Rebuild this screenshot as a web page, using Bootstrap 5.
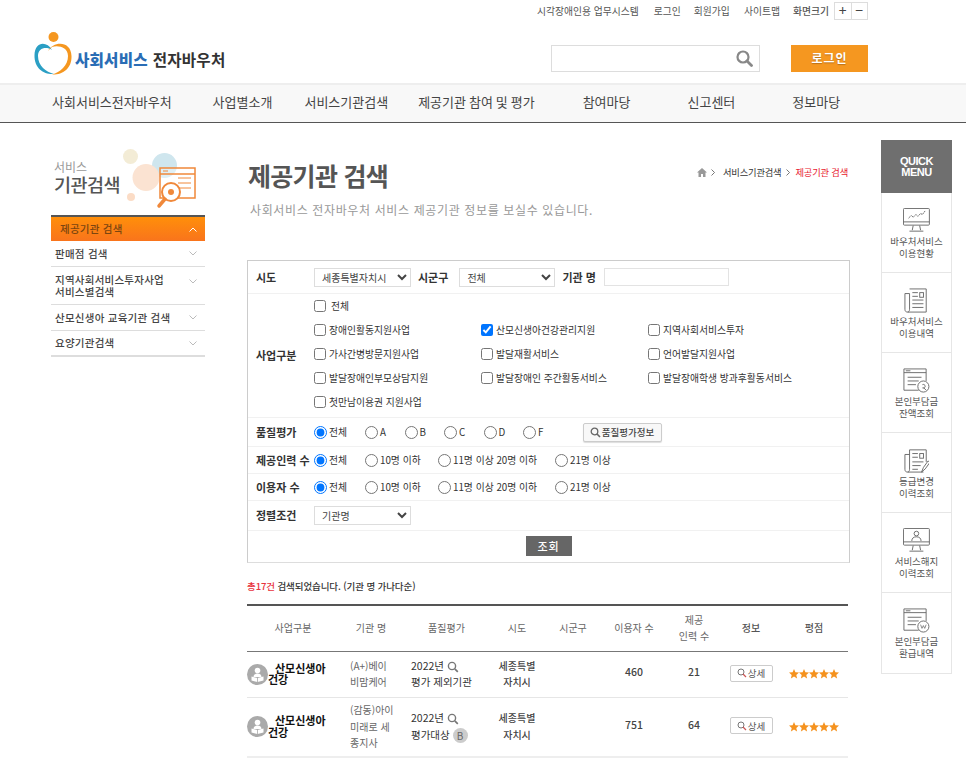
<!DOCTYPE html>
<html lang="ko">
<head>
<meta charset="utf-8">
<title>제공기관 검색</title>
<link rel="stylesheet" href="https://cdn.jsdelivr.net/npm/bootstrap@5.3.0/dist/css/bootstrap.min.css">
<style>
html,body{height:761px;overflow:hidden}
body{font-family:"Noto Sans CJK KR","Noto Sans",sans-serif;font-size:11px;color:#444;background:#fff;line-height:1.3}
.util-bar{height:22px;padding-right:98px;color:#555;font-size:9.8px}
.util-bar a{color:#555;text-decoration:none}
.util-link{margin-left:15px}
.util-link.u3{margin-left:13px}.util-link.u4{margin-left:14px}.util-link.u5{margin-left:13px;font-weight:500}
.size-box{margin-left:5px;border:1px solid #ddd;height:18px;width:34px;font-size:14px;color:#444}
.size-box span{flex:1;text-align:center;line-height:15px}
.size-box span+span{border-left:1px solid #ddd}
.head-row{height:61px;padding:0 98px 0 33px}
.logo-svg{margin-top:3px}
.logo-txt{font-size:15.6px;font-weight:700;color:#333;margin-left:2px;margin-top:13px;letter-spacing:.2px}
.logo-txt b{color:#2a6db5;margin-right:5px}
.search-box{width:209px;height:27px;border:1px solid #ddd;margin-top:11px;padding-right:6px}
.login-btn{width:77px;height:27px;background:#f59720;color:#fff;font-size:12px;font-weight:700;border-radius:0;border:0;padding:0;margin-left:31px;margin-top:11px;letter-spacing:1px;text-shadow:0 1px 1px #b8701a}
.login-btn:hover{background:#f59720;color:#fff}
.gnb{height:40px;background:#f8f8f8;border-top:2px solid #eee;border-bottom:1px solid #555;padding:0 0 5px 52px;align-items:center;flex-wrap:nowrap}
.gnb .nav-link{padding:0;color:#444;font-size:13px;line-height:17px;white-space:nowrap;word-spacing:-.7px}
.gnb .g2{margin-left:41px}.gnb .g3{margin-left:32px}.gnb .g4{margin-left:30px}.gnb .g5{margin-left:48px}.gnb .g6{margin-left:57px}.gnb .g7{margin-left:57px}
.page-row{padding:17px 14px 0 51px}
.side-col{width:154px;flex:none;margin-right:42px;padding-top:8px}
.side-head{height:67px;padding-left:3px}
.side-small{font-size:12px;color:#999;line-height:13px;padding-top:12px}
.side-big{font-size:18.5px;font-weight:500;color:#555;line-height:23px;letter-spacing:-.5px;white-space:nowrap}
.side-menu .list-group-item{border:0;border-bottom:1px solid #ddd;border-radius:0;padding:0 4px;min-height:26px;font-size:10.5px;color:#444;font-weight:500;line-height:12px;background:transparent;letter-spacing:.25px}
.side-menu .list-group-item.on{height:26px;background:linear-gradient(#ff8f0a,#f9741c);border-top:2px solid #555;border-bottom:0;color:#7a4510;padding-left:9px}
.side-menu .list-group-item.tall{min-height:38px}
.side-menu .list-group-item:last-child{border-bottom-width:2px}
.main-col{width:603px;flex:none;margin-right:31px}
.title-row{height:62px;padding-left:1px}
.page-title{font-size:25px;font-weight:700;color:#555;margin:17px 0 0;line-height:36px;letter-spacing:-.7px}
.crumb{font-size:9.300px;color:#333;padding:26px 2px 0 0;letter-spacing:-.2px}
.crumb .now{color:#e8212e}
.crumb svg.home{margin-right:4px}
.crumb svg.sep{margin:0 8px 0 0}
.crumb svg.sep2{margin:0 5px}
.sub-txt{font-size:12px;color:#999;padding-left:3px;margin:0 0 42px;line-height:16px;letter-spacing:.63px;height:16px;white-space:nowrap}
.form-wrap{border:1px solid #ccc;border-bottom-color:#ddd;height:303px;font-size:9.8px;color:#333}
.frow{border-bottom:1px solid #f1f1f1;padding-left:8px;white-space:nowrap}
.lab{width:58px;flex:none;font-size:11px;font-weight:700;color:#333}
.lab-in{font-size:11px;font-weight:700;color:#333}
.ml-7{margin-left:7px}.ml-8{margin-left:8px}.ml-11{margin-left:11px}
.h33{height:33px}.h124{height:124px}.h29{height:29px}.h27{height:27px}.h30{height:30px}
.sel-own.form-select{appearance:auto;-webkit-appearance:auto;background-image:none;width:97px;height:19px;padding:0 0 0 3px;font-size:10px;border-radius:0;border:1px solid #ddd;color:#444;line-height:17px}
.sel-own.sel-narrow{width:96px}
.name-in.form-control{width:125px;height:18px;border-radius:0;border:1px solid #e3e3e3;padding:0}
.chk-grid{display:grid;grid-template-columns:167px 167px 190px;grid-auto-rows:24px;align-items:center;margin-bottom:2px}
.opt{display:flex;align-items:center;gap:3px;margin:0;color:#333}
.opt input{margin:0;width:12px;height:12px;flex:none}
.opt.rd input{width:13px;height:13px}
.opt.rd{gap:2px}
.all-txt{margin-left:2px}
.w-all{width:51px}.w-g{width:39.5px}.w-10{width:73px}.w-11{width:117px}
.q-btn{margin-left:20px;width:79px;height:19px;padding:0;font-size:9.5px;color:#444;background:#f8f8f8;border:1px solid #ccc;border-radius:2px;font-weight:500;box-shadow:0 1px 1px #ddd;display:flex;align-items:center;justify-content:center;gap:1px}
.go-wrap{padding-top:5px}
.go-btn{width:46px;height:20px;background:#666;color:#fff;font-size:11px;padding:0;border:0;border-radius:0;font-weight:500;letter-spacing:1px}
.go-btn:hover{background:#666;color:#fff}
.res-line{font-size:9.5px;font-weight:500;color:#333;margin:16px 0 11px;line-height:14px;height:14px;letter-spacing:-.1px}
.res-line b{color:#e8323c;font-weight:500}
.tbl{width:601px;table-layout:fixed;margin:0;border-top:2px solid #555;font-size:10px}
.tbl th,.tbl td{padding:0;text-align:center;vertical-align:middle;color:#555;font-weight:400;border-bottom:1px solid #e6e6e6;background:transparent;line-height:16.5px}
.tbl thead th{height:46px;border-bottom:1px solid #777;color:#666}
.tbl thead th b{font-weight:500;color:#555}
.tbl .r1 td{height:46px}.tbl .r2 td{height:60px;border-bottom:2px solid #eee}
.cat{font-size:11px;font-weight:700;color:#111;line-height:11.5px;text-align:left;text-indent:7px;word-break:keep-all;width:64px}
.cat-ic{width:21px;height:21px;flex:none;display:block}
.tbl td.org,.tbl td.qual{text-align:left;font-size:10px}
.tbl td.org{padding-left:11px;color:#666}
.tbl td.qual{padding-left:8px;color:#333;font-size:10.5px}
.tbl td.sido{font-weight:500;color:#444;font-size:10px}
.tbl td.num{font-size:10.5px;color:#444;font-weight:500;padding-bottom:4px}
.bdg{display:inline-block;width:15px;height:15px;border-radius:50%;background:#ccc;text-align:center;font-size:10px;line-height:15px;color:#666;vertical-align:middle}
.dt-btn{width:43px;height:17px;padding:0;font-size:9.5px;color:#555;background:#fff;border:1px solid #ccc;border-radius:2px;display:inline-flex;align-items:center;justify-content:center;gap:1px;vertical-align:middle;margin-bottom:2px}
.stars{display:block;margin:0 auto}
.quick{width:71px;flex:none}
.quick-top{height:53px;background:#6f6f6f;color:#fff;font-family:"Liberation Sans",sans-serif;font-size:11px;font-weight:700;line-height:11px;letter-spacing:-.5px;text-align:center}
.quick-list{border:1px solid #e6e6e6;border-top:0}
.quick-item{height:80px;border-bottom:1px solid #e6e6e6;text-align:center;font-size:9.5px;line-height:12px;color:#555;padding-top:15px}
.quick-item:last-child{border-bottom:0}
.quick-item svg{display:block;margin:0 auto 2px;height:25px;width:auto}
</style>
</head>
<body>
<div class="util-bar d-flex justify-content-end align-items-center">
  <a class="util-link" href="#">시각장애인용 업무시스템</a><a class="util-link" href="#">로그인</a><a class="util-link u3" href="#">회원가입</a><a class="util-link u4" href="#">사이트맵</a><span class="util-link u5">화면크기</span>
  <div class="size-box d-flex"><span>+</span><span>−</span></div>
</div>
<div class="head-row d-flex align-items-center">
  <svg class="logo-svg" width="40" height="46" viewBox="33 31 40 46" aria-hidden="true">
    <circle cx="53.500" cy="37" r="5" fill="#f59720"/>
    <path d="M52 50C47 41 35 41 34.500 55C34 69 45 75 54 74C46 72 38 66 38 56C38 48 46 46 52 50Z" fill="#2b9fc4"/>
    <path d="M48 51C53 41 71 40 71.500 56C72 69 62 75 52 74.500C60 72 68 66 68 56C68 47 58 45 52 47Z" fill="#f59720"/>
  </svg>
  <div class="logo-txt"><b>사회서비스</b>전자바우처</div>
  <div class="search-box d-flex align-items-center justify-content-end ms-auto">
    <svg width="18" height="18" viewBox="0 0 18 18" aria-hidden="true"><circle cx="8" cy="8" r="5.500" fill="none" stroke="#888" stroke-width="2.200"/><path d="M12 12l4.500 4.500" stroke="#888" stroke-width="2.800" stroke-linecap="round"/></svg>
  </div>
  <button class="btn login-btn" type="button">로그인</button>
</div>
<ul class="nav gnb">
  <li class="nav-item"><a class="nav-link" href="#">사회서비스전자바우처</a></li>
  <li class="nav-item g2"><a class="nav-link" href="#">사업별소개</a></li>
  <li class="nav-item g3"><a class="nav-link" href="#">서비스기관검색</a></li>
  <li class="nav-item g4"><a class="nav-link" href="#">제공기관 참여 및 평가</a></li>
  <li class="nav-item g5"><a class="nav-link" href="#">참여마당</a></li>
  <li class="nav-item g6"><a class="nav-link" href="#">신고센터</a></li>
  <li class="nav-item g7"><a class="nav-link" href="#">정보마당</a></li>
</ul>
<div class="page-row d-flex align-items-start">
  <aside class="side-col">
    <div class="side-head d-flex">
      <div><div class="side-small">서비스</div><div class="side-big">기관검색</div></div>
      <svg class="ms-auto" width="82" height="66" viewBox="123 148 82 66" aria-hidden="true">
        <circle cx="130.500" cy="156.500" r="7.500" fill="#f3ecd6"/>
        <circle cx="164.500" cy="165.500" r="12.500" fill="#cfe6ee"/>
        <circle cx="146" cy="177.500" r="13.500" fill="#fbe3d2"/>
        <circle cx="131" cy="197" r="4" fill="#fbdcc6"/>
        <rect x="160" y="168" width="35" height="30" fill="#fff" fill-opacity=".35" stroke="#f0883a" stroke-width="1.500"/>
        <path d="M160 174h35" stroke="#f0883a" stroke-width="1.500"/>
        <path d="M163 171h5M178 178h13M178 183h13M178 188h13" stroke="#f0883a"/>
        <circle cx="171" cy="192" r="9" fill="#fff" stroke="#f0883a" stroke-width="2"/>
        <circle cx="171" cy="192" r="3" fill="#f0883a"/>
        <path d="M165 199l-6 7" stroke="#f0883a" stroke-width="3.500" stroke-linecap="round"/>
      </svg>
    </div>
    <div class="list-group side-menu">
      <a href="#" class="list-group-item on d-flex align-items-center justify-content-between">제공기관 검색<svg width="8" height="5" viewBox="0 0 8 5" class="me-1" aria-hidden="true"><path d="M.5 4.500L4 1l3.500 3.500" fill="none" stroke="#fff"/></svg></a>
      <a href="#" class="list-group-item d-flex align-items-center justify-content-between">판매점 검색<svg width="8" height="5" viewBox="0 0 8 5" class="me-1" aria-hidden="true"><path d="M.5.5L4 4 7.500.5" fill="none" stroke="#bbb"/></svg></a>
      <a href="#" class="list-group-item tall d-flex align-items-center justify-content-between"><span>지역사회서비스투자사업<br>서비스별검색</span><svg width="8" height="5" viewBox="0 0 8 5" class="me-1 mb-2" aria-hidden="true"><path d="M.5.5L4 4 7.500.5" fill="none" stroke="#bbb"/></svg></a>
      <a href="#" class="list-group-item d-flex align-items-center justify-content-between">산모신생아 교육기관 검색<svg width="8" height="5" viewBox="0 0 8 5" class="me-1" aria-hidden="true"><path d="M.5.5L4 4 7.500.5" fill="none" stroke="#bbb"/></svg></a>
      <a href="#" class="list-group-item d-flex align-items-center justify-content-between">요양기관검색<svg width="8" height="5" viewBox="0 0 8 5" class="me-1" aria-hidden="true"><path d="M.5.5L4 4 7.500.5" fill="none" stroke="#bbb"/></svg></a>
    </div>
  </aside>
  <main class="main-col">
    <div class="title-row d-flex justify-content-between align-items-start">
      <h1 class="page-title">제공기관 검색</h1>
      <div class="crumb d-flex align-items-center">
        <svg class="home" width="10" height="9" viewBox="0 0 10 9" aria-hidden="true"><path d="M5 0L0 4.500h1.500V9h2.500V6h2v3h2.500V4.500H10z" fill="#999"/></svg>
        <svg class="sep" width="4" height="7" viewBox="0 0 4 7" aria-hidden="true"><path d="M.5.5l3 3-3 3" fill="none" stroke="#555" stroke-width=".8"/></svg>서비스기관검색<svg class="sep2" width="4" height="7" viewBox="0 0 4 7" aria-hidden="true"><path d="M.5.5l3 3-3 3" fill="none" stroke="#555" stroke-width=".8"/></svg><span class="now">제공기관 검색</span>
      </div>
    </div>
    <p class="sub-txt">사회서비스 전자바우처 서비스 제공기관 정보를 보실수 있습니다.</p>
    <form class="form-wrap">
      <div class="frow h33 d-flex align-items-center">
        <div class="lab">시도</div>
        <select class="form-select sel-own"><option>세종특별자치시</option></select>
        <span class="lab-in ml-7">시군구</span>
        <select class="form-select sel-own sel-narrow ml-11"><option>전체</option></select>
        <span class="lab-in ml-7">기관 명</span>
        <input class="form-control name-in ml-8" type="text" aria-label="기관 명">
      </div>
      <div class="frow h124 d-flex align-items-center">
        <div class="lab">사업구분</div>
        <div class="chk-grid">
          <label class="opt"><input type="checkbox"><span class="all-txt">전체</span></label><span></span><span></span>
          <label class="opt"><input type="checkbox">장애인활동지원사업</label>
          <label class="opt"><input type="checkbox" checked>산모신생아건강관리지원</label>
          <label class="opt"><input type="checkbox">지역사회서비스투자</label>
          <label class="opt"><input type="checkbox">가사간병방문지원사업</label>
          <label class="opt"><input type="checkbox">발달재활서비스</label>
          <label class="opt"><input type="checkbox">언어발달지원사업</label>
          <label class="opt"><input type="checkbox">발달장애인부모상담지원</label>
          <label class="opt"><input type="checkbox">발달장애인 주간활동서비스</label>
          <label class="opt"><input type="checkbox">발달장애학생 방과후활동서비스</label>
          <label class="opt"><input type="checkbox">첫만남이용권 지원사업</label>
        </div>
      </div>
      <div class="frow h29 d-flex align-items-center">
        <div class="lab">품질평가</div>
        <label class="opt rd w-all"><input type="radio" name="q" checked>전체</label>
        <label class="opt rd w-g"><input type="radio" name="q">A</label>
        <label class="opt rd w-g"><input type="radio" name="q">B</label>
        <label class="opt rd w-g"><input type="radio" name="q">C</label>
        <label class="opt rd w-g"><input type="radio" name="q">D</label>
        <label class="opt rd w-g"><input type="radio" name="q">F</label>
        <button class="btn q-btn" type="button"><svg width="11" height="11" viewBox="0 0 11 11" aria-hidden="true"><circle cx="4.500" cy="4.500" r="3.300" fill="none" stroke="#666" stroke-width="1.300"/><path d="M7 7l3 3" stroke="#666" stroke-width="1.600"/></svg>품질평가정보</button>
      </div>
      <div class="frow h27 d-flex align-items-center">
        <div class="lab">제공인력 수</div>
        <label class="opt rd w-all"><input type="radio" name="s" checked>전체</label>
        <label class="opt rd w-10"><input type="radio" name="s">10명 이하</label>
        <label class="opt rd w-11"><input type="radio" name="s">11명 이상 20명 이하</label>
        <label class="opt rd"><input type="radio" name="s">21명 이상</label>
      </div>
      <div class="frow h27 d-flex align-items-center">
        <div class="lab">이용자 수</div>
        <label class="opt rd w-all"><input type="radio" name="u" checked>전체</label>
        <label class="opt rd w-10"><input type="radio" name="u">10명 이하</label>
        <label class="opt rd w-11"><input type="radio" name="u">11명 이상 20명 이하</label>
        <label class="opt rd"><input type="radio" name="u">21명 이상</label>
      </div>
      <div class="frow h30 d-flex align-items-center">
        <div class="lab">정렬조건</div>
        <select class="form-select sel-own"><option>기관명</option></select>
      </div>
      <div class="d-flex justify-content-center go-wrap">
        <button class="btn go-btn" type="button">조회</button>
      </div>
    </form>
    <p class="res-line"><b>총17건</b> 검색되었습니다. (기관 명 가나다순)</p>
    <table class="table tbl">
      <colgroup><col style="width:92px"><col style="width:64px"><col style="width:87px"><col style="width:54px"><col style="width:58px"><col style="width:64px"><col style="width:56px"><col style="width:58px"><col style="width:68px"></colgroup>
      <thead><tr><th>사업구분</th><th>기관 명</th><th>품질평가</th><th>시도</th><th>시군구</th><th>이용자 수</th><th>제공<br>인력 수</th><th><b>정보</b></th><th><b>평점</b></th></tr></thead>
      <tbody>
        <tr class="r1">
          <td><div class="d-flex align-items-center"><svg class="cat-ic" viewBox="0 0 21 21" aria-hidden="true"><circle cx="10.500" cy="10.500" r="10.500" fill="#aaa"/><circle cx="10.500" cy="6.500" r="2.800" fill="#fff"/><path d="M6.500 13c0-2.500 2-3.500 4-3.500s4 1 4 3.500z" fill="#fff"/><path d="M4.500 12.500l6 1.500 6-1.500v4l-6 1.500-6-1.500z" fill="#fff"/><path d="M10.500 14v4" stroke="#aaa" stroke-width=".8"/></svg><div class="cat">산모신생아 건강</div></div></td>
          <td class="org">(A+)베이<br>비맘케어</td>
          <td class="qual">2022년 <svg width="12" height="12" viewBox="0 0 12 12" aria-hidden="true"><circle cx="5" cy="5" r="3.600" fill="none" stroke="#777" stroke-width="1.400"/><path d="M7.800 7.800l3 3" stroke="#777" stroke-width="1.700"/></svg><br>평가 제외기관</td>
          <td class="sido">세종특별<br>자치시</td><td></td>
          <td class="num">460</td><td class="num">21</td>
          <td><button class="btn dt-btn" type="button"><svg width="10" height="10" viewBox="0 0 10 10" aria-hidden="true"><circle cx="4" cy="4" r="3" fill="none" stroke="#777"/><path d="M6 6l3 3" stroke="#c55" stroke-width="1.300"/></svg>상세</button></td>
          <td><svg class="stars" width="50" height="10" viewBox="0 0 50 10" role="img" aria-label="별점 5점"><defs><polygon id="st" points="5,0 6.400,3.300 10,3.600 7.300,6 8.100,9.500 5,7.600 1.900,9.500 2.700,6 0,3.600 3.600,3.300" fill="#f5921e"/></defs><use href="#st"/><use href="#st" x="10"/><use href="#st" x="20"/><use href="#st" x="30"/><use href="#st" x="40"/></svg></td>
        </tr>
        <tr class="r2">
          <td><div class="d-flex align-items-center"><svg class="cat-ic" viewBox="0 0 21 21" aria-hidden="true"><circle cx="10.500" cy="10.500" r="10.500" fill="#aaa"/><circle cx="10.500" cy="6.500" r="2.800" fill="#fff"/><path d="M6.500 13c0-2.500 2-3.500 4-3.500s4 1 4 3.500z" fill="#fff"/><path d="M4.500 12.500l6 1.500 6-1.500v4l-6 1.500-6-1.500z" fill="#fff"/><path d="M10.500 14v4" stroke="#aaa" stroke-width=".8"/></svg><div class="cat">산모신생아 건강</div></div></td>
          <td class="org">(감동)아이<br>미래로 세<br>종지사</td>
          <td class="qual">2022년 <svg width="12" height="12" viewBox="0 0 12 12" aria-hidden="true"><circle cx="5" cy="5" r="3.600" fill="none" stroke="#777" stroke-width="1.400"/><path d="M7.800 7.800l3 3" stroke="#777" stroke-width="1.700"/></svg><br>평가대상 <span class="bdg">B</span></td>
          <td class="sido">세종특별<br>자치시</td><td></td>
          <td class="num">751</td><td class="num">64</td>
          <td><button class="btn dt-btn" type="button"><svg width="10" height="10" viewBox="0 0 10 10" aria-hidden="true"><circle cx="4" cy="4" r="3" fill="none" stroke="#777"/><path d="M6 6l3 3" stroke="#c55" stroke-width="1.300"/></svg>상세</button></td>
          <td><svg class="stars" width="50" height="10" viewBox="0 0 50 10" role="img" aria-label="별점 5점"><use href="#st"/><use href="#st" x="10"/><use href="#st" x="20"/><use href="#st" x="30"/><use href="#st" x="40"/></svg></td>
        </tr>
      </tbody>
    </table>
  </main>
  <nav class="quick">
    <div class="quick-top d-flex align-items-center justify-content-center">QUICK<br>MENU</div>
    <div class="quick-list">
      <a class="quick-item d-block text-decoration-none" href="#"><svg width="30" height="27" viewBox="0 0 30 27" aria-hidden="true"><g fill="none" stroke="#666"><rect x=".5" y=".5" width="28" height="18" rx="1"/><path d="M.5 15h28M11 19l-1 5M18 19l1 5M7 25h15"/><path d="M6 11l3-3 2 2 3-3 2 2 3-3 2 1 3-4" stroke-dasharray="2 .6"/></g></svg>바우처서비스<br>이용현황</a>
      <a class="quick-item d-block text-decoration-none" href="#"><svg width="26" height="27" viewBox="0 0 26 27" aria-hidden="true"><g fill="none" stroke="#666"><path d="M6 1h18v25H4c-2 0-3-1-3-3V6h5M6 6v17c0 2-1 3-2 3"/><path d="M9 5h6M9 9h6M9 13h12M9 17h12M9 21h12"/><rect x="17" y="5" width="4" height="5"/></g></svg>바우처서비스<br>이용내역</a>
      <a class="quick-item d-block text-decoration-none" href="#"><svg width="30" height="27" viewBox="0 0 30 27" aria-hidden="true"><g fill="none" stroke="#666"><path d="M17 24H1V1h24v13"/><path d="M1 5h24M3 3h5M5 10h15M5 14h12M5 18h9"/><circle cx="22" cy="20" r="6"/><path d="M21 18a2 2 0 1 1 0 3.500M22 21l3 3"/></g></svg>본인부담금<br>잔액조회</a>
      <a class="quick-item d-block text-decoration-none" href="#"><svg width="28" height="27" viewBox="0 0 28 27" aria-hidden="true"><g fill="none" stroke="#666"><path d="M6 2h18v13M21 26H4c-2 0-3-1-3-3V7h5M6 2v21c0 2-1 3-2 3"/><path d="M9 6h6M9 10h6M9 15h12M9 19h9M9 23h6"/><rect x="17" y="6" width="4" height="5"/><path d="M19 26l2-5 5-7 2 1.500-5 7z"/></g></svg>등급변경<br>이력조회</a>
      <a class="quick-item d-block text-decoration-none" href="#"><svg width="30" height="27" viewBox="0 0 30 27" aria-hidden="true"><g fill="none" stroke="#666"><rect x=".5" y=".5" width="28" height="18" rx="1"/><path d="M.5 15h28M11 19l-1 5M18 19l1 5M7 25h15"/><circle cx="14.500" cy="6" r="2.500"/><path d="M9.500 14c0-3 2-4.500 5-4.500s5 1.500 5 4.500"/></g></svg>서비스해지<br>이력조회</a>
      <a class="quick-item d-block text-decoration-none" href="#"><svg width="30" height="27" viewBox="0 0 30 27" aria-hidden="true"><g fill="none" stroke="#666"><path d="M17 24H1V1h24v13"/><path d="M1 5h24M3 3h5M5 10h15M5 14h12M5 18h9"/><circle cx="22" cy="20" r="6"/><path d="M19 18l1.500 4 1.500-3 1.500 3 1.500-4" stroke-width=".8"/></g></svg>본인부담금<br>환급내역</a>
    </div>
  </nav>
</div>
<script src="https://cdn.jsdelivr.net/npm/bootstrap@5.3.0/dist/js/bootstrap.bundle.min.js"></script>
</body>
</html>
